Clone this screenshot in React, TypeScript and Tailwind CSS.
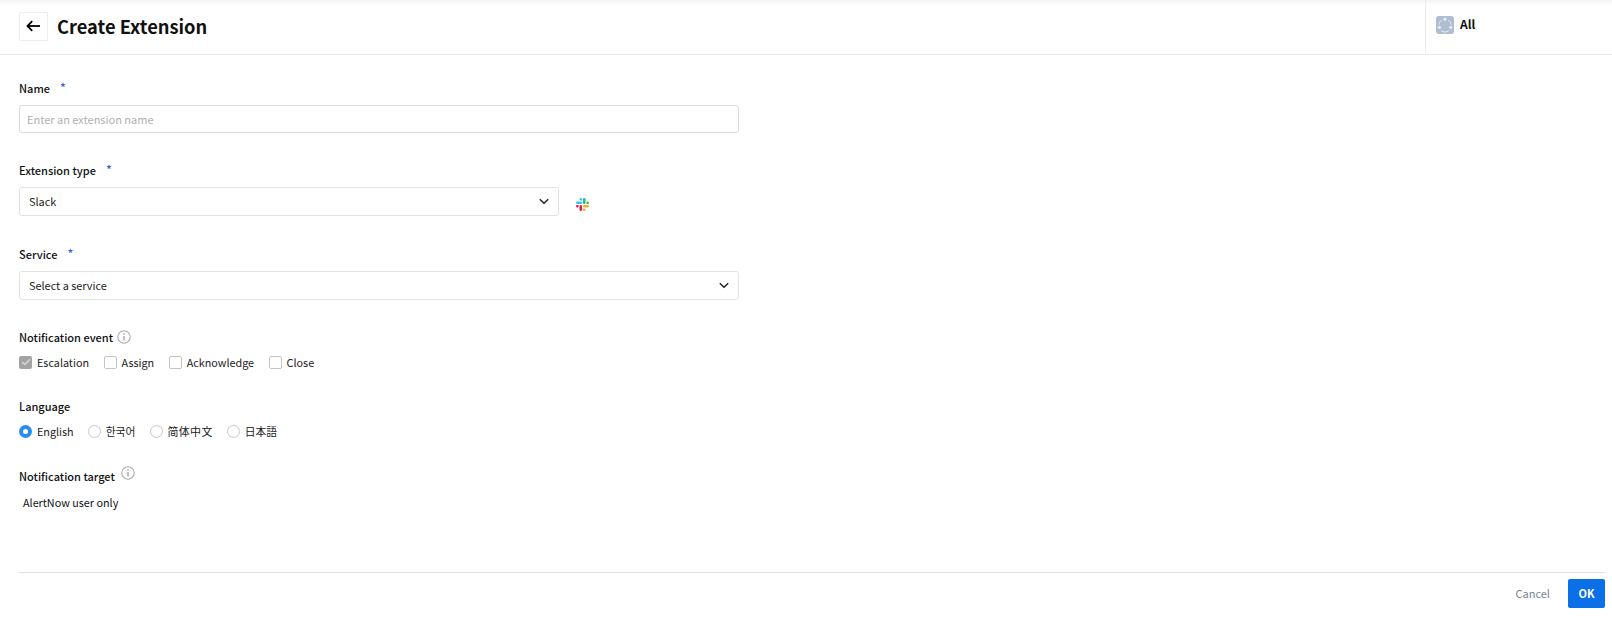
import React from "react";

const font = { fontFamily: '"Noto Sans CJK KR", "Noto Sans", sans-serif' };

function Chevron() {
  return (
    <svg width="10" height="7" viewBox="0 0 10 7" fill="none" stroke="#222" strokeWidth="1.5">
      <path d="M0.8 1.2 L5 5.2 L9.2 1.2" />
    </svg>
  );
}

function Info() {
  return (
    <svg width="14" height="14" viewBox="0 0 14 14" fill="none" stroke="#aaa" strokeWidth="1.1">
      <circle cx="7" cy="7" r="6.2" />
      <path d="M7 6 V10.5" strokeWidth="1.5" />
      <path d="M7 3.2 V4.7" strokeWidth="1.5" />
    </svg>
  );
}

function Label({ text, gap }: { text: string; gap?: string }) {
  return (
    <div className="flex items-start h-[20px] text-[11px] leading-[20px] font-medium text-[#111]">
      <span>{text}</span>
      {gap ? <span className={`${gap} text-[#2f5fe0] text-[12px] leading-[18px] font-medium`}>*</span> : null}
    </div>
  );
}

function Check({ label, checked }: { label: string; checked?: boolean }) {
  return (
    <div className="flex items-center">
      <div
        className={
          checked
            ? "w-[13px] h-[13px] rounded-[2px] bg-[#a3a3a3] flex items-center justify-center"
            : "w-[13px] h-[13px] rounded-[2px] border border-[#c4c4c4] bg-white"
        }
      >
        {checked ? (
          <svg width="10" height="8" viewBox="0 0 10 8" fill="none" stroke="#d6d6d6" strokeWidth="1.4">
            <path d="M1 4 L3.8 6.6 L9 1.2" />
          </svg>
        ) : null}
      </div>
      <span className="ml-[5px] text-[10.8px] leading-[16px] text-[#222]">{label}</span>
    </div>
  );
}

function Radio({ label, checked, wide }: { label: string; checked?: boolean; wide?: boolean }) {
  return (
    <div className="flex items-center">
      {checked ? (
        <div className="w-[13px] h-[13px] rounded-full bg-[#2b8cf0] flex items-center justify-center">
          <div className="w-[5px] h-[5px] rounded-full bg-white" />
        </div>
      ) : (
        <div className="w-[13px] h-[13px] rounded-full border border-[#c9c9c9] bg-white" />
      )}
      <span className={wide ? "ml-[5px] text-[11px] tracking-[0.3px] leading-[16px] text-[#222]" : "ml-[5px] text-[10.8px] leading-[16px] text-[#222]"}>{label}</span>
    </div>
  );
}

function Slack() {
  return (
    <svg width="13" height="13" viewBox="0 0 54 54">
      <path fill="#36C5F0" d="M19.7 0a5.4 5.4 0 0 0 0 10.8h5.4V5.4A5.4 5.4 0 0 0 19.7 0M19.7 14.4H5.4a5.4 5.4 0 0 0 0 10.8h14.3a5.4 5.4 0 0 0 0-10.8" />
      <path fill="#2EB67D" d="M54 19.8a5.4 5.4 0 0 0-10.8 0v5.4h5.4a5.4 5.4 0 0 0 5.4-5.4M39.6 19.8V5.4a5.4 5.4 0 0 0-10.8 0v14.4a5.4 5.4 0 0 0 10.8 0" />
      <path fill="#ECB22E" d="M34.2 54a5.4 5.4 0 0 0 0-10.8h-5.4v5.4a5.4 5.4 0 0 0 5.4 5.4M34.2 39.6h14.4a5.4 5.4 0 0 0 0-10.8H34.2a5.4 5.4 0 0 0 0 10.8" />
      <path fill="#E01E5A" d="M0 34.2a5.4 5.4 0 0 0 10.8 0v-5.4H5.4A5.4 5.4 0 0 0 0 34.2M14.4 34.2v14.4a5.4 5.4 0 0 0 10.8 0V34.2a5.4 5.4 0 0 0-10.8 0" />
    </svg>
  );
}

function Select({ text, width }: { text: string; width: string }) {
  return (
    <div className={`${width} h-[29px] rounded-[3px] border border-[#e2e2e2] bg-white flex items-center justify-between pl-[9px] pr-[9px]`}>
      <span className="text-[10.9px] text-[#222]">{text}</span>
      <Chevron />
    </div>
  );
}

export default function App() {
  return (
    <div style={font} className="w-[1612px] h-[636px] bg-white overflow-hidden flex flex-col">
      <header className="h-[55px] shrink-0 flex border-b border-[#e8e8e8] bg-gradient-to-b from-[#f4f4f4] to-white to-[6px]">
        <div className="flex-1 flex items-center pl-[19px] pb-[2px]">
          <div className="w-[29px] h-[29px] border border-[#ececec] rounded-[1px] bg-white flex items-center justify-center">
            <svg width="15" height="12" viewBox="0 0 15 12" fill="none" stroke="#000" strokeWidth="1.8">
              <path d="M14 6 H1.5" />
              <path d="M6.2 1.2 L1.5 6 L6.2 10.8" />
            </svg>
          </div>
          <h1 className="ml-[9px] -mt-[1px] text-[18.3px] leading-[28px] font-bold text-[#111]">Create Extension</h1>
        </div>
        <div className="w-[187px] border-l border-[#ececec] flex items-start pl-[10px] pt-[16px]">
          <div className="w-[18px] h-[18px] rounded-[3px] bg-[#afbdd0]">
            <svg width="18" height="18" viewBox="0 0 18 18" fill="none" stroke="#e9edf3" strokeWidth="1">
              <path d="M5.6 4.2 A6.6 6.6 0 0 0 2.8 8.6" />
              <path d="M12.4 4.2 A6.6 6.6 0 0 1 15.2 8.6" />
              <path d="M5 14.6 A6.6 6.6 0 0 0 13 14.6" />
              <circle cx="9" cy="3.2" r="1.6" fill="#e9edf3" stroke="none" />
              <circle cx="3.3" cy="11.3" r="1.6" fill="#e9edf3" stroke="none" />
              <circle cx="14.7" cy="11.3" r="1.6" fill="#e9edf3" stroke="none" />
            </svg>
          </div>
          <span className="ml-[6px] -mt-[1px] text-[12px] leading-[18px] font-bold text-[#111]">All</span>
        </div>
      </header>

      <main className="flex-1 flex flex-col pl-[19px] pr-[7px]">
        <div className="pt-[23px]">
          <Label text="Name" gap="ml-[10px]" />
          <div className="mt-[7px] w-[720px] h-[28px] rounded-[3px] border border-[#dcdcdc] flex items-center pl-[7px]">
            <span className="text-[11px] text-[#b0b0b0]">Enter an extension name</span>
          </div>
        </div>

        <div className="pt-[27px]">
          <Label text="Extension type" gap="ml-[10px]" />
          <div className="mt-[7px] flex items-center">
            <Select text="Slack" width="w-[540px]" />
            <div className="ml-[17px] mt-[5px]"><Slack /></div>
          </div>
        </div>

        <div className="pt-[28px]">
          <Label text="Service" gap="ml-[10px]" />
          <div className="mt-[7px]"><Select text="Select a service" width="w-[720px]" /></div>
        </div>

        <div className="pt-[27px]">
          <div className="flex items-center gap-[4px]">
            <Label text="Notification event" />
            <Info />
          </div>
          <div className="mt-[7px] flex items-center gap-[14.5px] h-[16px]">
            <Check label="Escalation" checked />
            <Check label="Assign" />
            <Check label="Acknowledge" />
            <Check label="Close" />
          </div>
        </div>

        <div className="pt-[26px]">
          <Label text="Language" />
          <div className="mt-[7px] flex items-center gap-[14px] h-[16px]">
            <Radio label="English" checked />
            <Radio label="한국어" />
            <Radio label="简体中文" wide />
            <Radio label="日本語" />
          </div>
        </div>

        <div className="pt-[27px]">
          <div className="flex items-start gap-[6px]">
            <Label text="Notification target" />
            <Info />
          </div>
          <div className="mt-[8px] pl-[4px] text-[10.8px] leading-[16px] text-[#111]">AlertNow user only</div>
        </div>

        <div className="mt-[62px] border-t border-[#dfe1e5] h-[7px]" />
        <div className="flex justify-end items-center">
          <span className="text-[11px] text-[#7c8494]">Cancel</span>
          <div className="ml-[18px] w-[37px] h-[29px] rounded-[2px] bg-[#0b6fe8] flex items-center justify-center text-[11px] font-bold text-white">OK</div>
        </div>
      </main>
    </div>
  );
}
